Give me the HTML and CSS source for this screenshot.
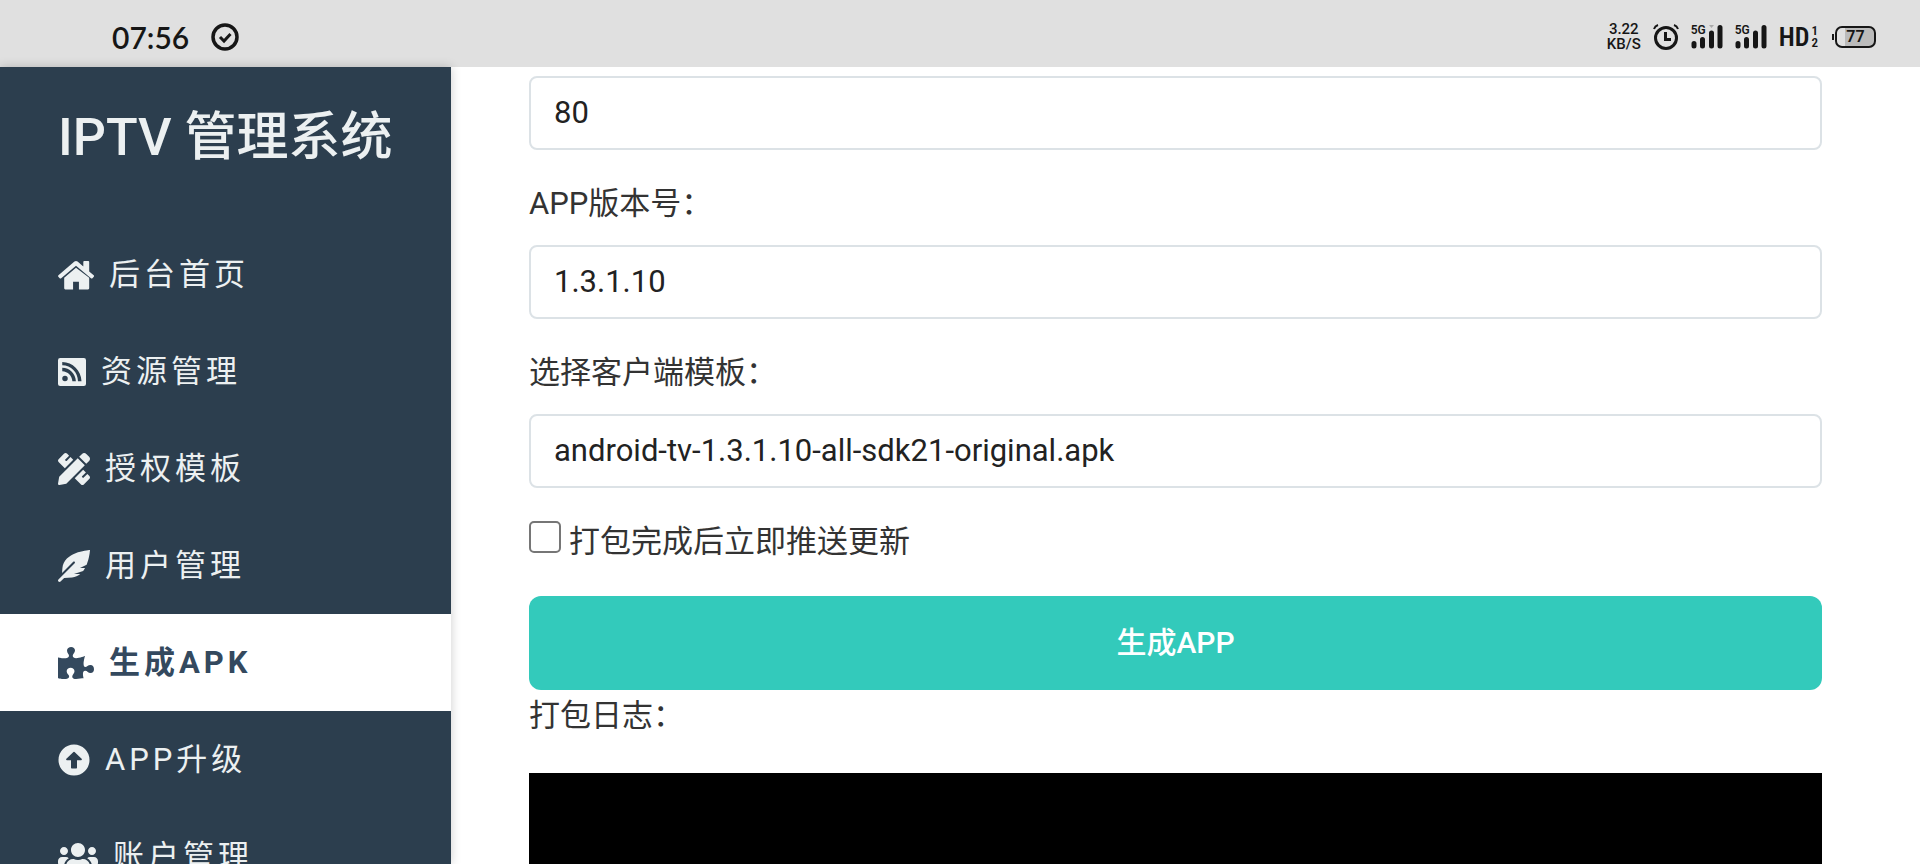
FILE: index.html
```
<!DOCTYPE html>
<html lang="zh-CN">

<head>
  <meta charset="utf-8">
  <title>IPTV 管理系统</title>
  <meta name="viewport" content="width=device-width, initial-scale=1">
  <link rel="stylesheet" href="styles.css">
</head>

<body>
  <header class="statusbar">
    <div class="status-left">
      <span class="clock">07:56</span>
      <svg width="28" height="28" viewBox="0 0 28 28" fill="none" stroke="#161616">
        <circle cx="14" cy="14" r="12" stroke-width="3.500"/>
        <path d="M9 14l4 4 6.500-7" stroke-width="3"/>
      </svg>
    </div>
    <div class="status-right">
      <span class="speed">3.22<br>KB/S</span>
      <svg width="26" height="26" viewBox="0 0 26 26" fill="none" stroke="#161616">
        <circle cx="13" cy="14" r="10.500" stroke-width="3"/>
        <path d="M12.500 8v7.500H18" stroke-width="3"/>
        <path d="M1 5q1-3 4-4M25 5q-1-3-4-4" stroke-width="2"/>
      </svg>
      <span class="signal">
        <span class="net">5G</span>
        <svg width="32" height="26" viewBox="0 0 32 26" stroke="#161616" stroke-width="5" stroke-linecap="round">
          <path d="M3 19.500v2.500M11.500 15.500v6.500M20.500 9v13M29 3.500v18.500"/>
          <path d="M18 1h5l-2.500 3z" fill="#aaa" stroke="none"/>
        </svg>
      </span>
      <span class="signal">
        <span class="net">5G</span>
        <svg width="32" height="26" viewBox="0 0 32 26" stroke="#161616" stroke-width="5" stroke-linecap="round">
          <path d="M3 19.500v2.500M11.500 15.500v6.500M20.500 9v13M29 3.500v18.500"/>
        </svg>
      </span>
      <span class="hd">HD<small>1<br>2</small></span>
      <span class="battery">77</span>
    </div>
  </header>

  <div class="layout">
    <nav class="sidebar">
      <h1>IPTV 管理系统</h1>
      <ul>
        <li><a href="#">
          <svg class="w36" viewBox="0 0 576 512"><path d="M288 138L99 300v168q0 18 18 18h124V362h94v124h146q18 0 18-18V300z"/><path d="M263 40q25-20 50 0l92 78V46q0-14 14-14h66q14 0 14 14v152l72 60q12 12 2 24l-22 24q-12 12-24 2L288 108 51 308q-14 10-24-2L5 282q-10-12 2-24z"/></svg>
          后台首页</a></li>
        <li><a href="#">
          <svg class="w28" viewBox="0 0 448 512"><path fill-rule="evenodd" d="M34 32h380a34 34 0 0 1 34 34v380a34 34 0 0 1-34 34H34a34 34 0 0 1-34-34V66a34 34 0 0 1 34-34zM112 316a44 44 0 1 0 0 88 44 44 0 0 0 0-88zM68 188v54c90 4 158 72 162 162h56c-4-120-98-214-218-216zM68 96v52c142 2 250 114 252 256h56C370 232 236 98 68 96z"/></svg>
          资源管理</a></li>
        <li><a href="#">
          <svg class="w32" viewBox="0 0 512 512"><path d="M109.460 244.040l134.580-134.560-44.120-44.120-61.680 61.680a7.919 7.919 0 0 1-11.210 0l-11.210-11.210c-3.100-3.100-3.100-8.120 0-11.210l61.680-61.680-33.640-33.650C131.470-3.100 111.390-3.100 99 9.290L9.290 99c-12.380 12.390-12.390 32.470 0 44.860l100.170 100.180zm388.470-116.800c18.760-18.760 18.750-49.170 0-67.930l-45.250-45.250c-18.760-18.760-49.180-18.760-67.950 0l-46.020 46.010 113.200 113.200 46.020-46.030zM316.080 82.710l-297 296.960L.32 487.110c-2.530 14.490 10.090 27.110 24.590 24.560l107.450-18.840L429.280 195.900 316.080 82.710zm186.630 285.430l-33.640-33.640-61.680 61.680c-3.100 3.100-8.120 3.100-11.210 0l-11.210-11.210c-3.090-3.100-3.090-8.120 0-11.210l61.680-61.680-44.140-44.140L267.930 402.500l100.210 100.200c12.390 12.390 32.470 12.390 44.860 0l89.710-89.700c12.390-12.390 12.390-32.470 0-44.860z"/></svg>
          授权模板</a></li>
        <li><a href="#">
          <svg class="w32" viewBox="0 0 512 512"><path d="M512 0C460.220 3.560 96.440 38.200 71.010 287.610c-3.090 26.660-4.840 53.440-5.990 80.240l178.870-178.690c6.250-6.250 16.400-6.250 22.650 0s6.250 16.380 0 22.630L7.040 471.030c-9.380 9.370-9.380 24.570 0 33.940 9.380 9.370 24.590 9.370 33.980 0l57.130-57.070c42.090-.140 84.150-2.530 125.960-7.360 53.480-5.440 97.020-26.470 132.580-56.540H255.740l146.790-48.880c11.250-14.890 21.370-30.710 30.450-47.120h-81.140l106.540-53.210C500.290 132.860 510.190 26.260 512 0z"/></svg>
          用户管理</a></li>
        <li class="active"><a href="#">
          <svg class="w36" viewBox="0 0 576 512"><path d="M519.442 288.651c-41.519 0-59.500 31.593-82.058 31.593C377.409 320.244 432 144 432 144s-196.288 80-196.288-3.297c0-35.827 36.288-46.250 36.288-85.985C272 19.216 243.885 0 210.539 0c-34.654 0-66.366 18.891-66.366 56.346 0 41.364 31.711 59.277 31.711 81.750C175.885 207.719 0 166.758 0 166.758v333.237s178.635 41.047 178.635-28.662c0-22.473-40-40.107-40-81.471 0-37.456 29.250-56.346 63.577-56.346 33.673 0 61.788 19.216 61.788 54.717 0 39.735-36.288 50.158-36.288 85.985 0 60.803 129.675 25.730 181.230 25.730 0 0-34.725-120.101 25.827-120.101 35.962 0 46.423 36.152 86.308 36.152C556.712 416 576 387.990 576 354.443c0-34.199-18.962-65.792-56.558-65.792z"/></svg>
          生成APK</a></li>
        <li><a href="#">
          <svg class="w32" viewBox="0 0 512 512"><path fill-rule="evenodd" d="M256 8a248 248 0 1 1 0 496 248 248 0 0 1 0-496zM220 392h72a12 12 0 0 0 12-12V258h65c12 0 17-13 9-21L265 128a12 12 0 0 0-18 0L134 237c-8 8-3 21 9 21h65v122a12 12 0 0 0 12 12z"/></svg>
          APP升级</a></li>
        <li><a href="#">
          <svg class="w40" viewBox="0 0 640 512"><path d="M96 224c35.300 0 64-28.700 64-64s-28.700-64-64-64-64 28.700-64 64 28.700 64 64 64zm448 0c35.300 0 64-28.700 64-64s-28.700-64-64-64-64 28.700-64 64 28.700 64 64 64zm32 32h-64c-17.600 0-33.500 7.100-45.100 18.600 40.300 22.100 68.900 62 75.100 109.400h66c17.700 0 32-14.300 32-32v-32c0-35.300-28.700-64-64-64zm-256 0c61.900 0 112-50.100 112-112S381.900 32 320 32 208 82.100 208 144s50.100 112 112 112zm76.800 32h-8.300c-20.800 10-43.900 16-68.500 16s-47.600-6-68.500-16h-8.300C179.600 288 128 339.600 128 403.200V432c0 26.500 21.500 48 48 48h288c26.500 0 48-21.500 48-48v-28.800c0-63.600-51.600-115.200-115.200-115.200zm-223.700-13.400C161.500 263.100 145.600 256 128 256H64c-35.300 0-64 28.700-64 64v32c0 17.700 14.300 32 32 32h65.900c6.300-47.400 34.900-87.300 75.200-109.400z"/></svg>
          账户管理</a></li>
      </ul>
    </nav>

    <main>
      <form onsubmit="return false">
        <div class="form-group">
          <input class="form-control" type="text" value="80" aria-label="端口">
        </div>
        <div class="form-group">
          <label for="version">APP版本号：</label>
          <input class="form-control" type="text" id="version" value="1.3.1.10">
        </div>
        <div class="form-group">
          <label for="template">选择客户端模板：</label>
          <select class="form-control" id="template">
            <option>android-tv-1.3.1.10-all-sdk21-original.apk</option>
          </select>
        </div>
        <div class="check">
          <input type="checkbox" id="push">
          <label for="push">打包完成后立即推送更新</label>
        </div>
        <button class="btn" type="submit">生成APP</button>
      </form>
      <label class="log-label" for="log">打包日志：</label>
      <textarea id="log" readonly></textarea>
    </main>
  </div>
</body>

</html>
```
FILE: styles.css
```
* {
  box-sizing: border-box;
}

body {
  margin: 0;
  height: 100vh;
  display: flex;
  flex-direction: column;
  overflow: hidden;
  background: #fff;
  color: #333;
  font-family: Roboto, "Noto Sans CJK SC", sans-serif;
  font-size: 31px;
  line-height: 47px;
}

/* status bar */
.statusbar {
  flex: none;
  height: 67px;
  padding: 7px 44px 0 112px;
  display: flex;
  align-items: center;
  justify-content: space-between;
  background: #e0e0e0;
  color: #161616;
}

.status-left {
  display: flex;
  align-items: center;
  gap: 22px;
}

.clock {
  font-family: Lato, sans-serif;
  font-size: 30px;
  font-weight: 600;
}

.status-right {
  display: flex;
  align-items: center;
  gap: 12px;
}

.speed {
  font-size: 15px;
  line-height: 15px;
  font-weight: 500;
  text-align: center;
}

.signal {
  position: relative;
  height: 26px;
}

.signal svg {
  display: block;
}

.net {
  position: absolute;
  top: 0;
  left: 0;
  font-size: 12px;
  line-height: 12px;
  font-weight: 600;
}

.hd {
  display: flex;
  align-items: center;
  gap: 2px;
  font-family: "Roboto Condensed", "Liberation Sans Narrow", Roboto, sans-serif;
  font-size: 26px;
  line-height: 26px;
  font-weight: 600;
}

.hd small {
  font-size: 13px;
  line-height: 12px;
}

.battery {
  position: relative;
  width: 41px;
  height: 22px;
  margin-left: 5px;
  border: 2px solid #161616;
  border-radius: 7px;
  background: linear-gradient(to right, #e0e0e0 8px, #bbb 8px);
  font-size: 16px;
  line-height: 18px;
  font-weight: 600;
  text-align: center;
}

.battery::before {
  content: "";
  position: absolute;
  left: -5px;
  top: 6px;
  width: 2px;
  height: 6px;
  background: #161616;
}

.layout {
  flex: 1;
  min-height: 0;
  display: flex;
}

/* sidebar */
.sidebar {
  flex: none;
  width: 451px;
  overflow: hidden;
  background: #2c3e4e;
  box-shadow: 0 0 10px rgba(0, 0, 0, 0.2);
}

.sidebar h1 {
  margin: 0;
  padding: 31px 58px 49px;
  color: #ecf0f1;
  font-size: 52px;
  line-height: 79px;
  font-weight: 500;
  white-space: nowrap;
}

.sidebar ul {
  margin: 0;
  padding: 0;
  list-style: none;
}

.sidebar a {
  display: flex;
  align-items: center;
  gap: 15px;
  padding: 25px 58px;
  color: #ecf0f1;
  letter-spacing: 4px;
  text-decoration: none;
}

.sidebar .active a {
  background: #fff;
  color: #34495e;
  font-weight: 700;
}

.sidebar svg {
  flex: none;
  height: 32px;
  fill: currentColor;
}

.w28 {
  width: 28px;
}

.w32 {
  width: 32px;
}

.w36 {
  width: 36px;
}

.w40 {
  width: 40px;
}

/* form */
main {
  flex: 1;
  min-width: 0;
  display: flex;
  flex-direction: column;
  padding: 9px 98px 0 78px;
}

.form-group {
  margin-bottom: 30px;
}

.form-group label {
  display: block;
  margin-bottom: 18px;
}

.form-control {
  display: block;
  width: 100%;
  height: 74px;
  padding: 0 23px 2px;
  border: 2px solid #dce2e6;
  border-radius: 8px;
  background: #fff;
  color: #222;
  font: inherit;
  appearance: none;
}

.check {
  display: flex;
  align-items: center;
  gap: 8px;
  margin-bottom: 31px;
}

.check input {
  width: 32px;
  height: 32px;
  margin: 0 0 10px;
  border: 2px solid #767676;
  border-radius: 5px;
  background: #fff;
  appearance: none;
}

.check input:checked {
  background: #33cabb;
}

.btn {
  display: block;
  width: 100%;
  height: 94px;
  padding-bottom: 3px;
  border: 0;
  border-radius: 12px;
  background: #33cabb;
  color: #fff;
  font: inherit;
  font-size: 30px;
  font-weight: 500;
}

.log-label {
  margin-top: 2px;
}

#log {
  flex: 1;
  width: 100%;
  margin-top: 34px;
  padding: 12px;
  border: 0;
  background: #000;
  color: #fff;
  resize: none;
}
```
